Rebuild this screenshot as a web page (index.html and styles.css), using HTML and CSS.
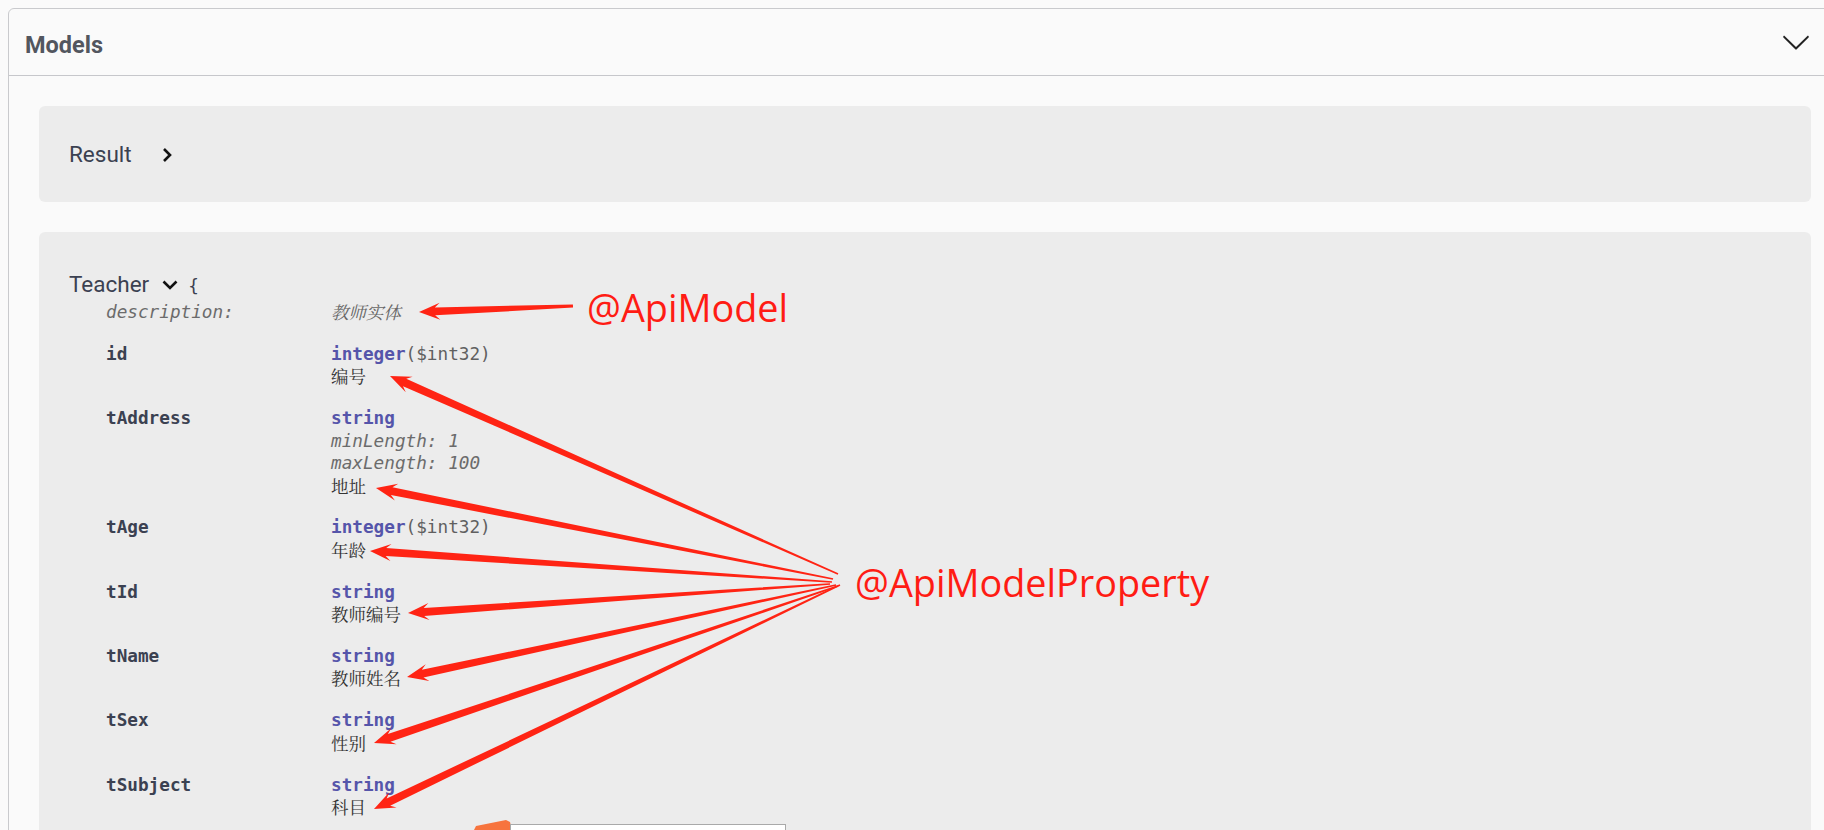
FILE: index.html
```html
<!DOCTYPE html>
<html lang="zh-CN">
<head>
<meta charset="utf-8">
<title>Models</title>
<link rel="stylesheet" href="styles.css">
</head>
<body>
<section class="models">
  <h4 class="models-head">
    <span class="models-label">Models</span>
    <svg class="head-arrow" viewBox="0 0 20 20"><path d="M17.418 6.109c.272-.268.709-.268.979 0s.271.701 0 .969l-7.908 7.83c-.27.268-.707.268-.979 0l-7.908-7.830c-.27-.268-.27-.701 0-.969.271-.268.709-.268.979 0L10 13.25l7.418-7.141z"/></svg>
  </h4>
  <div class="models-body">
    <div class="model-box">
      <div class="title-line">
        <span class="model-title">Result</span>
        <svg class="toggle-right" viewBox="0 0 14 16"><path d="M4 2 L10 8 L4 14"/></svg>
      </div>
    </div>
    <div class="model-box open">
      <div class="title-line">
        <span class="model-title">Teacher</span>
        <svg class="toggle-down" viewBox="0 0 16 12"><path d="M1.5 2.5 L8 9 L14.5 2.5"/></svg>
        <span class="brace">{</span>
      </div>
      <div class="props">
        <div class="prop">
          <div class="pname desc">description:</div>
          <div class="pval"><div class="cn desc-cn">教师实体</div></div>
        </div>
        <div class="prop">
          <div class="pname">id</div>
          <div class="pval"><div><span class="type">integer</span><span class="fmt">($int32)</span></div><div class="cn">编号</div></div>
        </div>
        <div class="prop">
          <div class="pname">tAddress</div>
          <div class="pval"><div><span class="type">string</span></div><div class="rule">minLength: 1</div><div class="rule">maxLength: 100</div><div class="cn">地址</div></div>
        </div>
        <div class="prop">
          <div class="pname">tAge</div>
          <div class="pval"><div><span class="type">integer</span><span class="fmt">($int32)</span></div><div class="cn">年龄</div></div>
        </div>
        <div class="prop">
          <div class="pname">tId</div>
          <div class="pval"><div><span class="type">string</span></div><div class="cn">教师编号</div></div>
        </div>
        <div class="prop">
          <div class="pname">tName</div>
          <div class="pval"><div><span class="type">string</span></div><div class="cn">教师姓名</div></div>
        </div>
        <div class="prop">
          <div class="pname">tSex</div>
          <div class="pval"><div><span class="type">string</span></div><div class="cn">性别</div></div>
        </div>
        <div class="prop">
          <div class="pname">tSubject</div>
          <div class="pval"><div><span class="type">string</span></div><div class="cn">科目</div></div>
        </div>
      </div>
    </div>
  </div>
</section>

<svg class="annot" width="1824" height="830" viewBox="0 0 1824 830">
  <g id="arrows" class="arrows"></g>
  <text class="note" x="587" y="322">@ApiModel</text>
  <text class="note" x="855" y="597">@ApiModelProperty</text>
  <polygon class="tab" points="474,830 476,826 506,820 510,822 512,830"/>
  <rect class="popup" x="510.5" y="824.5" width="275" height="20"/>
</svg>
<script src="script.js"></script>
</body>
</html>
```

FILE: styles.css
```css
html, body {
  overflow: hidden;
}
body {
  margin: 8px 0 0 8px;
  background: #fafafa;
  font-family: Roboto, "Noto Sans", sans-serif;
  color: #3b4151;
  position: relative;
}
.models {
  width: 1834px;
  box-sizing: border-box;
  border: 1px solid #c9cacd;
  border-radius: 6px;
  background: #fafafa;
}
.models-head {
  margin: 0;
  padding: 18px 30px 12px 16px;
  height: 36px;
  border-bottom: 1px solid #c6c7cb;
  display: flex;
  align-items: center;
  justify-content: space-between;
}
.models-label {
  font-family: Roboto, sans-serif;
  font-weight: 700;
  font-size: 23.5px;
  line-height: 36px;
  color: #52565f;
}
.head-arrow {
  width: 30px;
  height: 30px;
  margin-top: -6px;
  fill: #222;
}
.models-body {
  padding: 30px 30px 0;
  display: flex;
  flex-direction: column;
  gap: 30px;
}
.model-box {
  background: #ececec;
  border-radius: 6px;
  padding: 30px;
}
.model-box.open {
  padding: 35px 30px 60px;
}
.title-line {
  display: flex;
  align-items: center;
  height: 36px;
}
.model-box.open .title-line {
  height: 34px;
}
.model-title {
  font-family: Roboto, sans-serif;
  font-size: 22.5px;
  line-height: 36px;
  color: #3b4151;
}
.toggle-right {
  width: 14px;
  height: 16px;
  margin-left: 28px;
  margin-top: 2px;
  fill: none;
  stroke: #111;
  stroke-width: 2.6;
}
.toggle-down {
  width: 16px;
  height: 12px;
  margin-left: 13px;
  margin-top: 2px;
  fill: none;
  stroke: #111;
  stroke-width: 2.6;
}
.brace {
  font-family: "DejaVu Sans Mono", monospace;
  font-size: 17.7px;
  margin-left: 10px;
  margin-top: 4px;
  color: #3b4151;
}
.props {
  padding-left: 37px;
  font-family: "DejaVu Sans Mono", "Noto Sans CJK SC", monospace;
  font-size: 17.7px;
  line-height: 22.5px;
}
.prop {
  display: grid;
  grid-template-columns: 225px 1fr;
  padding-bottom: 19.3px;
}
.pname {
  font-weight: 700;
  color: #3b4151;
}
.pname.desc {
  font-weight: 400;
  font-style: italic;
  color: #6b6b6b;
}
.type {
  color: #55a;
  font-weight: 700;
}
.fmt {
  color: #606060;
}
.rule {
  font-style: italic;
  color: #6b6b6b;
}
.cn {
  font-family: "Noto Serif CJK SC", "Source Han Serif SC", "Noto Sans CJK SC", sans-serif;
  font-size: 17.5px;
  color: #333;
}
.cn.desc-cn {
  font-style: italic;
  color: #666;
}

.annot {
  position: absolute;
  top: -8px;
  left: -8px;
  pointer-events: none;
}
.arrows path {
  fill: #ff2414;
}
.note {
  font-family: "Open Sans", "Liberation Sans", sans-serif;
  font-size: 37.8px;
  fill: #ff1c14;
}
.tab {
  fill: #f7743e;
}
.popup {
  fill: #ffffff;
  stroke: #a9a9a9;
  stroke-width: 1;
}
```

FILE: script.js
```js
(function () {
  var arrows = [
    [573, 306, 419, 312, 1.6],
    [838, 574, 390, 376, 0.8],
    [833, 579, 376, 488, 0.8],
    [832, 582, 370, 551, 0.8],
    [830, 584, 408, 613, 0.8],
    [836, 585, 407, 677, 0.8],
    [838, 586, 374, 743, 0.8],
    [840, 585, 374, 809, 0.8]
  ];
  var out = '';
  arrows.forEach(function (a) {
    var dx = a[0] - a[2], dy = a[1] - a[3];
    var len = Math.sqrt(dx * dx + dy * dy);
    var ang = Math.atan2(dy, dx) * 180 / Math.PI;
    var t = a[4];
    out += '<path transform="translate(' + a[2] + ' ' + a[3] + ') rotate(' + ang.toFixed(2) + ')" d="M0 0 L21 -8.5 L16 -4 L' +
      len.toFixed(1) + ' -' + t + ' L' + len.toFixed(1) + ' ' + t + ' L16 4 L21 8.5 Z"/>';
  });
  document.getElementById('arrows').innerHTML = out;
})();
```
